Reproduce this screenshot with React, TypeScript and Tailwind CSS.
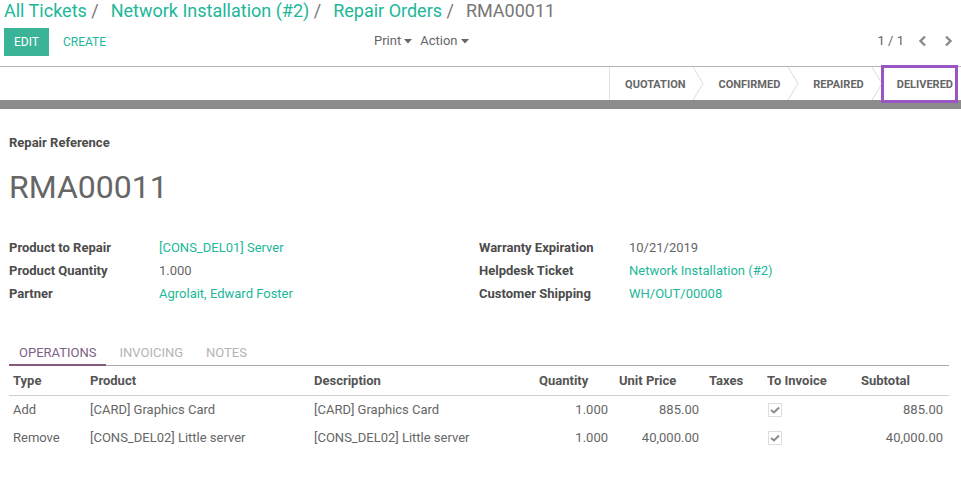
import { ReactNode } from "react";

const teal = "text-[#21b799]";

const Caret = () => (
  <svg width="8" height="5" viewBox="0 0 8 5" className="ml-[3px] mt-[1px]">
    <polygon points="0,0 8,0 4,4.5" fill="#666" />
  </svg>
);

const Chevron = ({ dir }: { dir: "left" | "right" }) => (
  <svg width="10" height="12" viewBox="0 0 10 12">
    <polyline
      points={dir === "left" ? "7,1.5 2.5,6 7,10.5" : "3,1.5 7.5,6 3,10.5"}
      fill="none"
      stroke="#8a8a8a"
      strokeWidth="2.4"
    />
  </svg>
);

const StepSep = () => (
  <svg width="10" height="33" viewBox="0 0 10 33" className="shrink-0">
    <polyline points="0,0 10,16.5 0,33" fill="none" stroke="#dcdcdc" strokeWidth="1" />
  </svg>
);

const Sep = () => <span className="mr-[3px] text-[#777]"> /&nbsp; </span>;

const Field = ({ label, children }: { label: string; children: ReactNode }) => (
  <div className="flex h-[23px] items-center">
    <div className="w-[150px] font-bold text-[#4c4c4c]">{label}</div>
    <div className="text-[#666]">{children}</div>
  </div>
);

const CheckBox = () => (
  <div className="flex h-[14px] w-[14px] items-center justify-center border border-[#dedede] bg-white">
    <svg width="10" height="8" viewBox="0 0 10 8">
      <polyline points="1,4 4,6.5 9,1.5" fill="none" stroke="#8a8a8a" strokeWidth="2" />
    </svg>
  </div>
);

const lines = [
  { type: "Add", product: "[CARD] Graphics Card", qty: "1.000", price: "885.00", subtotal: "885.00" },
  { type: "Remove", product: "[CONS_DEL02] Little server", qty: "1.000", price: "40,000.00", subtotal: "40,000.00" },
];

export default function App() {
  return (
    <div className="min-h-screen bg-white text-[13px] text-[#666] font-['Roboto',sans-serif]">
      {/* Control panel */}
      <div className="border-b border-[#b3b3b3] px-[4px] h-[67px]">
        <div className="h-[22px] text-[18px] leading-[22px] whitespace-nowrap">
          <span className={teal}>All Tickets</span>
          <Sep />
          <span className={teal}>Network Installation (#2)</span>
          <Sep />
          <span className={teal}>Repair Orders</span>
          <Sep />
          <span className="text-[#777]">RMA00011</span>
        </div>
        <div className="mt-[6px] flex h-[28px] items-center">
          <div className="flex w-[370px] items-center">
            <button className="h-[28px] w-[45px] bg-[#3ab397] text-[12px] text-white">EDIT</button>
            <button className={`ml-[14px] text-[12px] ${teal}`}>CREATE</button>
          </div>
          <div className="flex items-center gap-[8px] -mt-[3px]">
            <span className="flex items-center">Print<Caret /></span>
            <span className="flex items-center">Action<Caret /></span>
          </div>
          <div className="flex-1" />
          <div className="flex items-center pr-[4px] -mt-[3px]">
            <span className="text-[#666]">1 / 1</span>
            <span className="ml-[14px]"><Chevron dir="left" /></span>
            <span className="ml-[15px]"><Chevron dir="right" /></span>
          </div>
        </div>
      </div>

      {/* Status bar */}
      <div className="flex h-[33px] justify-end">
        <div className="flex h-full items-stretch border-l border-[#e2e2e2] text-[11px] font-bold text-[#666]">
          <div className="flex items-center pl-[15px] pr-[8px] pt-[3px]">QUOTATION</div>
          <StepSep />
          <div className="flex items-center pl-[15px] pr-[8px] pt-[3px]">CONFIRMED</div>
          <StepSep />
          <div className="flex items-center pl-[15px] pr-[8px] pt-[3px]">REPAIRED</div>
          <StepSep />
          <div className="relative flex items-center pl-[15px] pr-[8px] pt-[3px]">
            DELIVERED
            <div className="absolute left-[-1px] right-[3px] top-[-2px] bottom-[-3px] border-[3px] border-[#9a55c2]" />
          </div>
        </div>
      </div>
      <div className="h-[9px] bg-[#8c8c8c]" />

      {/* Sheet */}
      <div className="pl-[9px] pr-[12px] pt-[25px]">
        <div className="font-bold leading-[18px] text-[#4c4c4c]">Repair Reference</div>
        <div className="mt-[15px] text-[32px] leading-[40px] text-[#666]">RMA00011</div>

        <div className="mt-[29px] grid grid-cols-2">
          <div>
            <Field label="Product to Repair"><span className={teal}>[CONS_DEL01] Server</span></Field>
            <Field label="Product Quantity">1.000</Field>
            <Field label="Partner"><span className={teal}>Agrolait, Edward Foster</span></Field>
          </div>
          <div>
            <Field label="Warranty Expiration">10/21/2019</Field>
            <Field label="Helpdesk Ticket"><span className={teal}>Network Installation (#2)</span></Field>
            <Field label="Customer Shipping"><span className={teal}>WH/OUT/00008</span></Field>
          </div>
        </div>

        {/* Notebook */}
        <div className="mt-[39px] flex gap-[3px] border-b border-[#a8a8a8]">
          <div className="-mb-px border-b-2 border-[#875a7b] px-[10px] pb-[2px] leading-[18px] text-[#7d5f86]">OPERATIONS</div>
          <div className="px-[10px] pb-[3px] leading-[18px] text-[#b4b4b4]">INVOICING</div>
          <div className="px-[10px] pb-[3px] leading-[18px] text-[#b4b4b4]">NOTES</div>
        </div>

        <table className="w-full table-fixed border-collapse">
          <colgroup>
            <col className="w-[77px]" />
            <col className="w-[224px]" />
            <col className="w-[225px]" />
            <col className="w-[77px]" />
            <col className="w-[91px]" />
            <col className="w-[60px]" />
            <col className="w-[94px]" />
            <col />
          </colgroup>
          <thead>
            <tr className="h-[29px] border-b border-[#cfcfcf] text-left font-bold text-[#555]">
              <th className="px-[4px]">Type</th>
              <th className="px-[4px]">Product</th>
              <th className="px-[4px]">Description</th>
              <th className="px-[4px]">Quantity</th>
              <th className="pl-[7px]">Unit Price</th>
              <th className="pl-[6px]">Taxes</th>
              <th className="px-[4px]">To Invoice</th>
              <th className="px-[4px]">Subtotal</th>
            </tr>
          </thead>
          <tbody>
            {lines.map((l) => (
              <tr key={l.type} className="h-[28.5px] text-[#666]">
                <td className="px-[4px]">{l.type}</td>
                <td className="px-[4px]">{l.product}</td>
                <td className="px-[4px]">{l.product}</td>
                <td className="px-[4px] text-right">{l.qty}</td>
                <td className="px-[4px] text-right">{l.price}</td>
                <td className="px-[4px]" />
                <td className="px-[5px]"><CheckBox /></td>
                <td className="px-[6px] text-right">{l.subtotal}</td>
              </tr>
            ))}
          </tbody>
        </table>
      </div>
    </div>
  );
}
